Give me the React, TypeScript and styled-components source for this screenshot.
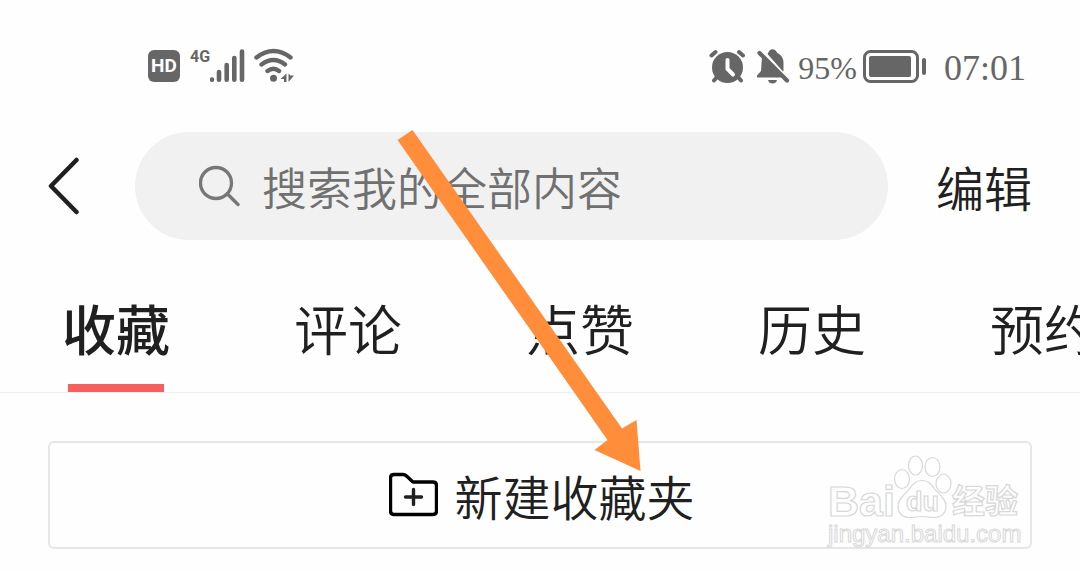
import React, { useState } from "react";
import styled, { createGlobalStyle } from "styled-components";

const GlobalStyle = createGlobalStyle`
  * { box-sizing: border-box; }
  body {
    margin: 0;
    background: #fefefe;
    color: #202020;
    font-family: "Noto Sans CJK SC", sans-serif;
    font-weight: 350;
  }
  button, input { font: inherit; color: inherit; border: 0; padding: 0; background: none; }
  button { cursor: pointer; }
  svg { display: block; flex: none; }
`;

const Screen = styled.div`
  position: relative;
  overflow: hidden;
  padding-bottom: 22px;
`;

const StatusBar = styled.div`
  display: flex;
  justify-content: space-between;
  align-items: center;
  height: 132px;
  padding: 0 54px 0 148px;
  color: #666;
`;

const StatusGroup = styled.div`
  display: flex;
  align-items: center;
`;

const HdBadge = styled.span`
  display: flex;
  align-items: center;
  justify-content: center;
  width: 32px;
  height: 32px;
  border-radius: 6px;
  background: #666;
  color: #fff;
  font: bold 19px/32px "Roboto", sans-serif;
`;

const NetworkType = styled.span`
  align-self: flex-start;
  width: 20px;
  margin-left: 10px;
  font: bold 16px/18px "Roboto", sans-serif;
`;

const StatusText = styled.span<{ $size: number }>`
  font: ${(p) => p.$size}px/36px "Liberation Serif", serif;
  margin-top: 4px;
`;

const WifiSlot = styled.span`
  margin-left: 9px;
`;
const AlarmSlot = styled.span`
  margin-right: 12px;
`;
const BellSlot = styled.span`
  margin-right: 8px;
`;
const BatterySlot = styled.span`
  margin: 0 17px 0 6px;
`;

const Header = styled.header`
  display: flex;
  align-items: center;
  padding: 0 48px;
`;

const BackButton = styled.button`
  margin-right: 56px;
`;

const SearchBox = styled.label`
  display: flex;
  flex: 1;
  min-width: 0;
  align-items: center;
  gap: 22px;
  height: 108px;
  padding: 0 48px 0 64px;
  border-radius: 54px;
  background: #f1f1f1;
`;

const SearchInput = styled.input`
  flex: 1;
  min-width: 0;
  height: 72px;
  font-size: 45px;
  color: #707070;
  outline: 0;
  &::placeholder { color: #707070; opacity: 1; }
`;

const EditButton = styled.button`
  margin-left: 48px;
  font-size: 48px;
  line-height: 72px;
`;

const Tabs = styled.nav`
  display: flex;
  gap: 124px;
  height: 153px;
  padding: 48px 0 0 62px;
  border-bottom: 1px solid #eee;
  overflow: hidden;
`;

const Tab = styled.button<{ $active: boolean }>`
  display: flex;
  flex: none;
  flex-direction: column;
  align-items: center;
  justify-content: space-between;
  height: 105px;
  font-size: 54px;
  line-height: 80px;
  font-weight: ${(p) => (p.$active ? 500 : 350)};
  &::after {
    content: "";
    width: 96px;
    height: 9px;
    background: ${(p) => (p.$active ? "#f75e5e" : "transparent")};
  }
`;

const Content = styled.main`
  position: relative;
  padding: 48px 48px 0;
`;

const CreateButton = styled.button`
  display: flex;
  align-items: center;
  justify-content: center;
  gap: 16px;
  width: 100%;
  height: 108px;
  padding-left: 4px;
  border: 2px solid #e6e6e6;
  border-radius: 6px;
  font-size: 48px;
  line-height: 72px;
`;

const Watermark = styled.svg`
  position: absolute;
  right: 54px;
  bottom: -3px;
  pointer-events: none;
`;

const PointerArrow = styled.svg`
  position: absolute;
  top: 0;
  left: 0;
  pointer-events: none;
`;

const SignalIcon = () => (
  <svg width="35" height="36" viewBox="210 48 35 36" stroke="#666" strokeWidth="4.6" strokeLinecap="round">
    <path d="M212 79.5v.2M219 72v7.700M226.700 65v14.700M234.300 58v21.700M242 51.500v28.200" />
  </svg>
);

const WifiIcon = () => (
  <svg width="42" height="36" viewBox="254 48 42 36" fill="none" stroke="#666" strokeWidth="4.400" strokeLinecap="round">
    <path d="M256.500 57.500Q273.500 44.500 290.500 57.500M261.500 64.500Q273.500 55.500 285 64.500M267.500 71Q273.500 66.500 279 71" />
    <circle cx="273.500" cy="78.300" r="3.500" fill="#666" stroke="none" />
    <path d="M286.500 73.500v8.500h-2.500v-3h-3.500zM288.500 73.500v8.500l5.500-6.500h-3.500z" fill="#666" stroke="none" />
  </svg>
);

const AlarmIcon = () => (
  <svg width="36" height="36" viewBox="709 48 36 36" fill="none" strokeLinecap="round">
    <circle cx="727.500" cy="67.500" r="15.500" fill="#666" />
    <path d="M711.500 55.500l4-3.500M743 55.500l-4-3.500M717 77l-3 3.500M738 77l3 3.500" stroke="#666" strokeWidth="4" />
    <path d="M727.500 60v9l5.500 5.500" stroke="#fefefe" strokeWidth="4" />
  </svg>
);

const BellIcon = () => (
  <svg width="33" height="36" viewBox="757 48 33 36">
    <path d="M767.500 54l2-3.500q3-2.500 6 0l2 2.500q6 3 6 10v8q-.5.500-1 0z" fill="#666" />
    <path d="M762 57l21 20.500h-26v-2l4-4.500z" fill="#666" />
    <path d="M759.500 53l27.500 27.500" stroke="#666" strokeWidth="4.200" strokeLinecap="round" />
    <path d="M768 80h9q-1 3.500-4.500 3.500t-4.500-3.500z" fill="#666" />
  </svg>
);

const BatteryIcon = () => (
  <svg width="64" height="36" viewBox="863 48 64 36">
    <rect x="864.500" y="51.500" width="53" height="30" rx="6" fill="none" stroke="#666" strokeWidth="3" />
    <rect x="869" y="56" width="42" height="21" rx="2" fill="#666" />
    <rect x="922" y="58" width="4" height="17" rx="2" fill="#666" />
  </svg>
);

const BackIcon = () => (
  <svg width="31" height="58" viewBox="48 156 31 58" fill="none" stroke="#202020" strokeWidth="4.500" strokeLinecap="round" strokeLinejoin="round">
    <path d="M76.500 159L51 185l25.500 26" />
  </svg>
);

const SearchIcon = () => (
  <svg width="41" height="42" viewBox="199 165 41 42" fill="none" stroke="#777" strokeWidth="3.300" strokeLinecap="round">
    <circle cx="216" cy="183" r="15.500" />
    <path d="M227.500 194l10.500 10.500" />
  </svg>
);

const FolderIcon = () => (
  <svg width="49" height="46" viewBox="389 471 49 46" fill="none" stroke="#000" strokeWidth="3.400" strokeLinejoin="round">
    <path d="M394 473.500h9q2 0 3.500 1.500l6.500 6h20q3.500 0 3.500 3.500V510q0 3.500-3.500 3.500h-39q-3.500 0-3.500-3.500v-33q0-3.500 3.500-3.500z" />
    <path d="M413.500 488.500v15M405.500 496h16" stroke="#202020" strokeLinecap="round" />
  </svg>
);

const BaiduMark = () => (
  <Watermark width="200" height="100" viewBox="826 452 200 100" fill="#fff" stroke="#d8d8d8" strokeWidth="1.200" aria-label="Baidu 经验">
    <g fontFamily="Liberation Sans, sans-serif">
      <text x="828" y="516" fontSize="43" fontWeight="700">Bai</text>
      <ellipse cx="902" cy="479" rx="7.500" ry="9.500" />
      <ellipse cx="915.500" cy="465.500" rx="7" ry="9.500" />
      <ellipse cx="932.500" cy="467" rx="7.500" ry="9.500" />
      <ellipse cx="943.500" cy="483.500" rx="7.500" ry="9.500" />
      <path d="M922 480.500c7 0 10 5 13 9 4 5 11 9 11 17 0 7-5 11-11 11-5 0-8-1-13-1s-8 1-13 1c-7 0-11-5-11-11 0-8 7-12 11-17 3-4 6-9 13-9z" />
      <text x="906" y="511" fontSize="27" fontWeight="700">du</text>
      <text x="828" y="542" fontSize="24" strokeWidth="1">jingyan.baidu.com</text>
    </g>
    <text x="952" y="513" fontSize="33" fontWeight="700" fontFamily="Noto Sans CJK SC, sans-serif">经验</text>
  </Watermark>
);

const tabs = ["收藏", "评论", "点赞", "历史", "预约"];

export default function App() {
  const [active, setActive] = useState(tabs[0]);
  return (
    <Screen>
      <GlobalStyle />
      <StatusBar>
        <StatusGroup>
          <HdBadge>HD</HdBadge>
          <NetworkType>4G</NetworkType>
          <SignalIcon />
          <WifiSlot><WifiIcon /></WifiSlot>
        </StatusGroup>
        <StatusGroup>
          <AlarmSlot><AlarmIcon /></AlarmSlot>
          <BellSlot><BellIcon /></BellSlot>
          <StatusText $size={32}>95%</StatusText>
          <BatterySlot><BatteryIcon /></BatterySlot>
          <StatusText $size={36}>07:01</StatusText>
        </StatusGroup>
      </StatusBar>
      <Header>
        <BackButton aria-label="返回"><BackIcon /></BackButton>
        <SearchBox>
          <SearchIcon />
          <SearchInput type="text" aria-label="搜索" placeholder="搜索我的全部内容" />
        </SearchBox>
        <EditButton>编辑</EditButton>
      </Header>
      <Tabs>
        {tabs.map((name) => (
          <Tab key={name} $active={name === active} onClick={() => setActive(name)}>
            {name}
          </Tab>
        ))}
      </Tabs>
      <Content>
        <CreateButton>
          <FolderIcon />
          新建收藏夹
        </CreateButton>
        <BaiduMark />
      </Content>
      <PointerArrow width="660" height="480" viewBox="0 0 660 480" fill="#ff8d3a">
        <path d="M397.500 140L412.500 130 622 428.500 636.500 420 640.500 471 594.500 450 607.500 440z" />
      </PointerArrow>
    </Screen>
  );
}
